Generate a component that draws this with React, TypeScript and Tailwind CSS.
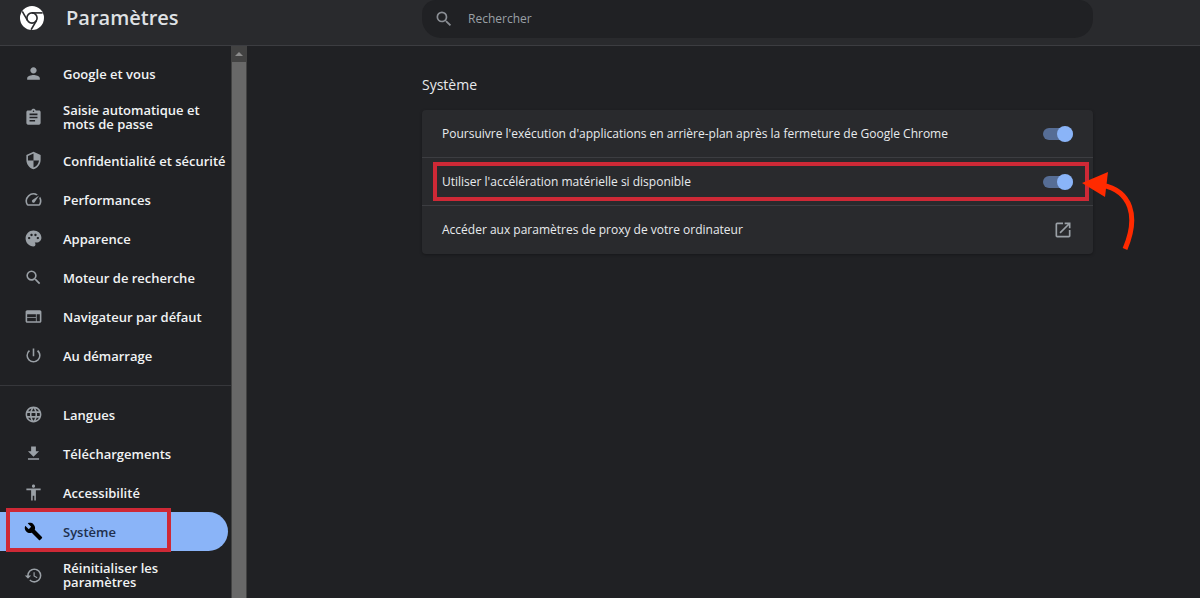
import React, { useState } from 'react';
import type { IconType } from 'react-icons';
import {
  MdAccessibility,
  MdAssignment,
  MdBuild,
  MdFileDownload,
  MdHistory,
  MdLanguage,
  MdOpenInNew,
  MdOutlineSpeed,
  MdPalette,
  MdPerson,
  MdPowerSettingsNew,
  MdSearch,
  MdSecurity,
  MdWeb,
} from 'react-icons/md';

interface NavEntry {
  id: string;
  label: string;
  icon: IconType;
  tall?: boolean;
}

const mainEntries: NavEntry[] = [
  { id: 'people', label: 'Google et vous', icon: MdPerson },
  { id: 'autofill', label: 'Saisie automatique et mots de passe', icon: MdAssignment, tall: true },
  { id: 'privacy', label: 'Confidentialité et sécurité', icon: MdSecurity },
  { id: 'performance', label: 'Performances', icon: MdOutlineSpeed },
  { id: 'appearance', label: 'Apparence', icon: MdPalette },
  { id: 'search', label: 'Moteur de recherche', icon: MdSearch },
  { id: 'defaultBrowser', label: 'Navigateur par défaut', icon: MdWeb },
  { id: 'onStartup', label: 'Au démarrage', icon: MdPowerSettingsNew },
];

const advancedEntries: NavEntry[] = [
  { id: 'languages', label: 'Langues', icon: MdLanguage },
  { id: 'downloads', label: 'Téléchargements', icon: MdFileDownload },
  { id: 'accessibility', label: 'Accessibilité', icon: MdAccessibility },
  { id: 'system', label: 'Système', icon: MdBuild },
  { id: 'reset', label: 'Réinitialiser les paramètres', icon: MdHistory, tall: true },
];

const ChromeLogo: React.FC<{ className?: string }> = ({ className }) => (
  <svg viewBox="0 0 24 24" className={className} aria-hidden="true">
    <circle cx="12" cy="12" r="12" fill="#fff" />
    <g fill="none" stroke="#292a2d" strokeWidth="1.6">
      <circle cx="12" cy="12" r="5.1" />
      <path d="M12 6.9h10.6" />
      <path d="M12 6.9h10.6" transform="rotate(120 12 12)" />
      <path d="M12 6.9h10.6" transform="rotate(240 12 12)" />
    </g>
  </svg>
);

const NavItem: React.FC<{ entry: NavEntry; active: boolean }> = ({ entry, active }) => {
  const Icon = entry.icon;
  return (
    <a
      href={`#${entry.id}`}
      className={`relative flex shrink-0 items-center gap-5 pl-6 mr-[3px] rounded-r-full text-[13px] leading-[14px] font-semibold ${
        entry.tall ? 'h-12' : 'h-[39px]'
      } ${active ? 'bg-[#8ab4f8] text-[#202f4d]' : 'text-[#f1f3f4]'}`}
    >
      <Icon className={`size-[19px] shrink-0 ${active ? 'text-black' : 'text-[#9aa0a6]'}`} />
      <span className={entry.tall ? 'w-[150px]' : 'whitespace-nowrap'}>{entry.label}</span>
      {active && (
        <span className="absolute -top-1 left-1.5 h-11 w-[165px] border-4 border-[#ce2936] pointer-events-none"></span>
      )}
    </a>
  );
};

interface ToggleRowProps {
  label: string;
  children?: React.ReactNode;
}

const ToggleRow: React.FC<ToggleRowProps> = ({ label, children }) => {
  const [checked, setChecked] = useState(true);
  return (
    <label className="relative flex h-12 items-center justify-between px-5">
      <span>{label}</span>
      <input
        type="checkbox"
        role="switch"
        checked={checked}
        onChange={() => setChecked(!checked)}
        className="relative h-3 w-[30px] appearance-none rounded-full bg-[#566d95] before:absolute before:-top-0.5 before:left-0 before:size-4 before:rounded-full before:bg-[#9aa0a6] checked:before:left-3.5 checked:before:bg-[#8ab4f8]"
      />
      {children}
    </label>
  );
};

const App: React.FC = () => {
  return (
    <div className="flex h-screen flex-col overflow-hidden bg-[#202124] text-[#e8eaed] font-['Open_Sans','Noto_Sans',sans-serif]">
      {/* Toolbar */}
      <header className="flex h-[46px] shrink-0 border-b border-[#3c3d41] bg-[#292a2d]">
        <div className="flex h-9 w-[315px] shrink-0 items-center gap-[22px] pl-5">
          <ChromeLogo className="size-6" />
          <h1 className="text-[20px] leading-6 font-semibold text-[#dfe1e4]">Paramètres</h1>
        </div>
        <div className="flex flex-1 justify-center">
          <div className="flex h-[38px] w-full max-w-[671px] items-center gap-3.5 rounded-b-[19px] rounded-t-[14px] bg-[#202124] pl-3">
            <MdSearch className="size-5 text-[#8a8e94]" />
            <input
              type="text"
              aria-label="Rechercher"
              placeholder="Rechercher"
              className="flex-1 bg-transparent text-xs outline-none placeholder:text-[#9aa0a6]"
            />
          </div>
        </div>
      </header>

      <div className="flex min-h-0 flex-1">
        {/* Sidebar */}
        <nav className="flex w-[231px] shrink-0 flex-col overflow-hidden pt-2">
          {mainEntries.map((entry) => (
            <NavItem key={entry.id} entry={entry} active={false} />
          ))}
          <hr className="mt-2.5 mb-[9px] shrink-0 border-[#36373b]" />
          {advancedEntries.map((entry) => (
            <NavItem key={entry.id} entry={entry} active={entry.id === 'system'} />
          ))}
        </nav>

        {/* Scrollbar */}
        <div className="flex w-4 shrink-0 flex-col bg-[#424242]">
          <div className="flex h-4 items-center justify-center">
            <svg viewBox="0 0 8 4" className="h-1 w-2 fill-[#8b8b8b]">
              <path d="M4 0 8 4H0z" />
            </svg>
          </div>
          <div className="mx-px flex-1 bg-[#686868]"></div>
        </div>

        {/* Content */}
        <main className="flex flex-1 justify-center pl-[68px]">
          <section className="w-full max-w-[671px] pt-[29px]">
            <h2 className="mb-[15px] text-sm leading-5">Système</h2>
            <div className="divide-y divide-[#3c3d41] rounded bg-[#292a2d] text-xs shadow-[0_1px_3px_rgba(0,0,0,0.3)]">
              <ToggleRow label="Poursuivre l'exécution d'applications en arrière-plan après la fermeture de Google Chrome" />
              <ToggleRow label="Utiliser l'accélération matérielle si disponible">
                <span className="absolute inset-y-1 left-[11px] right-1 border-4 border-[#ce2936] pointer-events-none"></span>
                <svg viewBox="0 0 56 80" className="absolute top-3.5 -right-[45px] h-20 w-14 pointer-events-none">
                  <path d="M20 13C49 19 57 44 43 77" fill="none" stroke="#ff2a00" strokeWidth="5" />
                  <path d="M0 11 26 0 23 25z" fill="#ff2a00" />
                </svg>
              </ToggleRow>
              <button type="button" className="flex h-12 w-full items-center justify-between px-5 text-left">
                <span>Accéder aux paramètres de proxy de votre ordinateur</span>
                <MdOpenInNew className="size-5 text-[#9aa0a6]" />
              </button>
            </div>
          </section>
        </main>
      </div>
    </div>
  );
};

export default App;
